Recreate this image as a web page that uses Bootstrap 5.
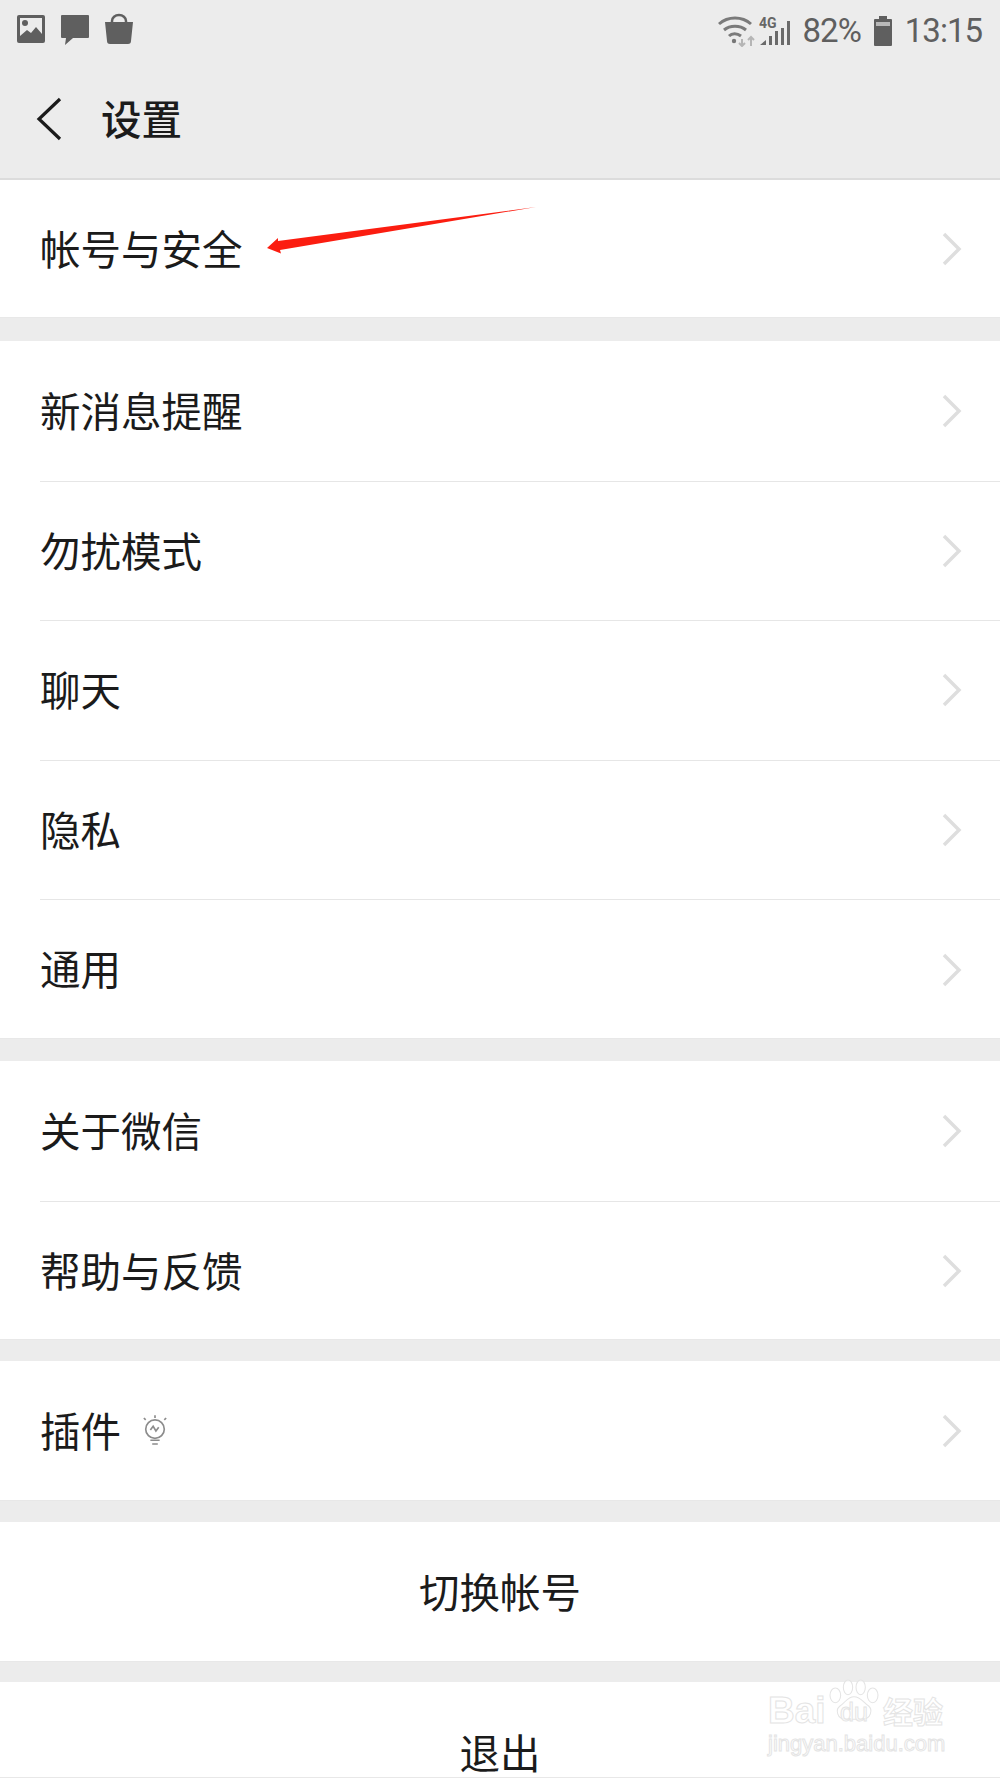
<!DOCTYPE html>
<html lang="zh">
<head>
  <meta charset="UTF-8" />
  <meta name="viewport" content="width=device-width, initial-scale=1.0" />
  <title>设置</title>
  <link href="https://cdn.jsdelivr.net/npm/bootstrap@5.3.0/dist/css/bootstrap.min.css" rel="stylesheet" />
  <style>
    body, html {
      margin: 0;
      background-color: #ececec;
      font-family: "Noto Sans CJK SC", "Liberation Sans", sans-serif;
      color: #1b1b1b;
    }
    .phone {
      width: 1000px;
      height: 1778px;
      overflow: hidden;
      position: relative;
    }
    /* Status bar */
    .status-bar {
      height: 60px;
      padding: 13px 18px 0 16px;
      color: #5f5f5f;
    }
    .status-icons {
      column-gap: 14px;
    }
    .status-text {
      font-family: Roboto, "Liberation Sans", sans-serif;
      font-size: 33px;
      line-height: 36px;
      letter-spacing: -1px;
    }
    .status-gap {
      margin-left: 12px;
    }
    /* Title bar */
    .title-bar {
      height: 120px;
      border-bottom: 2px solid #dcdcdc;
      padding-left: 36px;
    }
    .title-text {
      font-size: 40.5px;
      font-weight: 500;
      line-height: 1;
      margin-left: 39px;
      margin-top: -2px;
    }
    /* Rows */
    .setting-group {
      --bs-list-group-border-width: 0;
      --bs-list-group-border-radius: 0;
      --bs-list-group-item-padding-x: 0;
      --bs-list-group-item-padding-y: 0;
      background: #fff;
      box-shadow: inset 0 -1px 0 #e8e8e8;
    }
    .gap-after-a { margin-bottom: 23px; }
    .gap-after-b { margin-bottom: 22px; }
    .gap-after-c { margin-bottom: 21px; }
    .gap-after-d { margin-bottom: 20px; }
    .setting-row {
      height: 139.6px;
      margin-left: 40px;
      padding-right: 38px !important;
      font-size: 40.5px;
      line-height: 1;
      background: transparent;
      color: #1b1b1b;
    }
    .setting-row.first-row {
      height: 138px;
    }
    .setting-row + .setting-row {
      border-top: 1px solid #e6e6e6;
    }
    .row-label {
      padding-bottom: 2px;
    }
    .plugin-label {
      column-gap: 21px;
    }
    .setting-center {
      height: 140px;
      font-size: 40.5px;
      line-height: 1;
      background: transparent;
      color: #1b1b1b;
    }
    .setting-tail {
      height: 96px;
      padding-top: 50px !important;
      align-items: flex-start !important;
    }
    /* Arrow annotation and watermark */
    .red-arrow {
      position: absolute;
      left: 0;
      top: 0;
    }
    .watermark {
      position: absolute;
      left: 765px;
      top: 1668px;
      width: 200px;
      height: 100px;
    }
    .wm-main, .wm-url {
      position: absolute;
      color: rgba(255, 255, 255, 0.6);
      -webkit-text-stroke: 1px #e4e4e4;
      white-space: nowrap;
      line-height: 1;
    }
    .wm-main {
      font-family: "Liberation Sans", sans-serif;
      font-weight: 700;
      font-size: 37px;
      left: 3px;
      top: 24px;
    }
    .wm-du {
      font-size: 25px;
      font-weight: 400;
      left: 75px;
      top: 32px;
    }
    .wm-cn {
      font-family: "Noto Sans CJK SC", sans-serif;
      font-size: 30px;
      left: 118px;
      top: 27px;
    }
    .wm-paw {
      position: absolute;
      left: 63px;
      top: 4px;
    }
    .wm-url {
      font-family: "Liberation Sans", sans-serif;
      font-size: 22px;
      left: 3px;
      top: 65px;
    }
  </style>
</head>
<body>
  <div class="phone">
    <!-- Status bar -->
    <div class="status-bar d-flex align-items-start justify-content-between">
      <div class="d-flex status-icons">
        <svg width="30" height="30" viewBox="0 0 30 30"><rect x="1" y="2" width="28" height="28" rx="2" fill="#5f5f5f"/><path d="M4 23V5h22v16l-6-7-5 6-4-3z" fill="#ececec"/><circle cx="9" cy="10" r="3" fill="#5f5f5f"/></svg>
        <svg width="30" height="32" viewBox="0 0 30 32"><path d="M2 2h26a1 1 0 0 1 1 1v21a1 1 0 0 1-1 1H13l-8 7 1-7H2a1 1 0 0 1-1-1V3a1 1 0 0 1 1-1z" fill="#5f5f5f"/></svg>
        <svg width="30" height="32" viewBox="0 0 30 32"><path d="M1 9h28l-2 19a3 3 0 0 1-3 3H6a3 3 0 0 1-3-3z" fill="#5f5f5f"/><path d="M8 11V8a7 6 0 0 1 14 0v3" fill="none" stroke="#5f5f5f" stroke-width="2.5"/></svg>
      </div>
      <div class="d-flex align-items-center">
        <svg width="38" height="32" viewBox="0 0 38 32" fill="none"><path d="M2 9c9-8 23-8 32 0" stroke="#7a7a7a" stroke-width="3"/><path d="M7 15c6-5 16-5 22 0" stroke="#7a7a7a" stroke-width="3"/><path d="M12 21c3-3 8-3 12 0" stroke="#7a7a7a" stroke-width="3"/><circle cx="17" cy="26" r="2.2" fill="#777"/><path d="M25 24v7m-3-3 3 3 3-3" stroke="#b5b5b5" stroke-width="2"/><path d="M34 31v-9m-3 3 3-3 3 3" stroke="#b5b5b5" stroke-width="2"/></svg>
        <svg class="ms-1" width="32" height="32" viewBox="0 0 32 32"><text x="0" y="13" font-family="Roboto, sans-serif" font-weight="700" font-size="14" fill="#666">4G</text><path d="M1 30l6-5v5zM10 30v-9h3v9zM16 30V16h3v14zM22 30V13h3v17zM28 30V6h3v24z" fill="#6a6a6a"/></svg>
        <span class="status-text status-gap">82%</span>
        <svg class="status-gap" width="20" height="32" viewBox="0 0 20 32"><path d="M6 1h8v3h4a1 1 0 0 1 1 1v25a1 1 0 0 1-1 1H2a1 1 0 0 1-1-1V5a1 1 0 0 1 1-1h4z" fill="#5f5f5f"/><rect x="3" y="7" width="14" height="4" fill="#b9b9b9"/></svg>
        <span class="status-text status-gap">13:15</span>
      </div>
    </div>

    <!-- Title bar -->
    <div class="title-bar d-flex align-items-center">
      <svg width="26" height="44" viewBox="0 0 26 44" fill="none"><path d="M24 2 3 22l21 20" stroke="#1b1b1b" stroke-width="3.2"/></svg>
      <span class="title-text">设置</span>
    </div>

    <!-- Settings list -->
    <ul class="list-group setting-group gap-after-a">
      <li class="list-group-item setting-row first-row d-flex align-items-center justify-content-between"><span class="row-label">帐号与安全</span><svg width="20" height="34" viewBox="0 0 20 34" fill="none"><path d="M2 2l15 15L2 32" stroke="#dedede" stroke-width="3.5"/></svg></li>
    </ul>
    <ul class="list-group setting-group gap-after-b">
      <li class="list-group-item setting-row d-flex align-items-center justify-content-between"><span class="row-label">新消息提醒</span><svg width="20" height="34" viewBox="0 0 20 34" fill="none"><path d="M2 2l15 15L2 32" stroke="#dedede" stroke-width="3.5"/></svg></li>
      <li class="list-group-item setting-row d-flex align-items-center justify-content-between"><span class="row-label">勿扰模式</span><svg width="20" height="34" viewBox="0 0 20 34" fill="none"><path d="M2 2l15 15L2 32" stroke="#dedede" stroke-width="3.5"/></svg></li>
      <li class="list-group-item setting-row d-flex align-items-center justify-content-between"><span class="row-label">聊天</span><svg width="20" height="34" viewBox="0 0 20 34" fill="none"><path d="M2 2l15 15L2 32" stroke="#dedede" stroke-width="3.5"/></svg></li>
      <li class="list-group-item setting-row d-flex align-items-center justify-content-between"><span class="row-label">隐私</span><svg width="20" height="34" viewBox="0 0 20 34" fill="none"><path d="M2 2l15 15L2 32" stroke="#dedede" stroke-width="3.5"/></svg></li>
      <li class="list-group-item setting-row d-flex align-items-center justify-content-between"><span class="row-label">通用</span><svg width="20" height="34" viewBox="0 0 20 34" fill="none"><path d="M2 2l15 15L2 32" stroke="#dedede" stroke-width="3.5"/></svg></li>
    </ul>
    <ul class="list-group setting-group gap-after-c">
      <li class="list-group-item setting-row d-flex align-items-center justify-content-between"><span class="row-label">关于微信</span><svg width="20" height="34" viewBox="0 0 20 34" fill="none"><path d="M2 2l15 15L2 32" stroke="#dedede" stroke-width="3.5"/></svg></li>
      <li class="list-group-item setting-row d-flex align-items-center justify-content-between"><span class="row-label">帮助与反馈</span><svg width="20" height="34" viewBox="0 0 20 34" fill="none"><path d="M2 2l15 15L2 32" stroke="#dedede" stroke-width="3.5"/></svg></li>
    </ul>
    <ul class="list-group setting-group gap-after-c">
      <li class="list-group-item setting-row d-flex align-items-center justify-content-between">
        <span class="d-flex align-items-center plugin-label"><span class="row-label">插件</span>
          <svg width="26" height="34" viewBox="0 0 28 34" fill="none" stroke="#8c8c8c" stroke-width="1.8"><circle cx="14" cy="15" r="10"/><path d="M9 16l3-4 3 5 3-4"/><path d="M9 27h10M11 31h6"/><path d="M14 0v3M2 3l2 2M26 3l-2 2"/></svg>
        </span>
        <svg width="20" height="34" viewBox="0 0 20 34" fill="none"><path d="M2 2l15 15L2 32" stroke="#dedede" stroke-width="3.5"/></svg>
      </li>
    </ul>
    <ul class="list-group setting-group gap-after-d">
      <li class="list-group-item setting-center d-flex align-items-center justify-content-center"><span class="row-label">切换帐号</span></li>
    </ul>
    <ul class="list-group setting-group">
      <li class="list-group-item setting-center setting-tail d-flex justify-content-center">退出</li>
    </ul>

    <!-- Red annotation arrow -->
    <svg class="red-arrow" width="1000" height="300" viewBox="0 0 1000 300"><polygon points="536,207 278,241 278,238 267,248 281,253.5 280,250" fill="#fb1d10"/></svg>

    <!-- Baidu watermark -->
    <div class="watermark">
      <span class="wm-main">Bai</span>
      <svg class="wm-paw" width="52" height="56" viewBox="0 0 78 62" fill="rgba(255,255,255,.6)" stroke="#e4e4e4" stroke-width="1.6"><ellipse cx="11" cy="24" rx="8" ry="11"/><ellipse cx="30" cy="12" rx="7" ry="11"/><ellipse cx="49" cy="12" rx="7" ry="11"/><ellipse cx="67" cy="24" rx="8" ry="11"/><path d="M39 26c10 0 14 9 22 14 6 5 4 20-10 20H27C13 60 11 45 18 40c8-5 11-14 21-14z"/></svg>
      <span class="wm-main wm-du">du</span>
      <span class="wm-main wm-cn">经验</span>
      <span class="wm-url">jingyan.baidu.com</span>
    </div>
  </div>
  <script src="https://cdn.jsdelivr.net/npm/bootstrap@5.3.0/dist/js/bootstrap.bundle.min.js"></script>
</body>
</html>
